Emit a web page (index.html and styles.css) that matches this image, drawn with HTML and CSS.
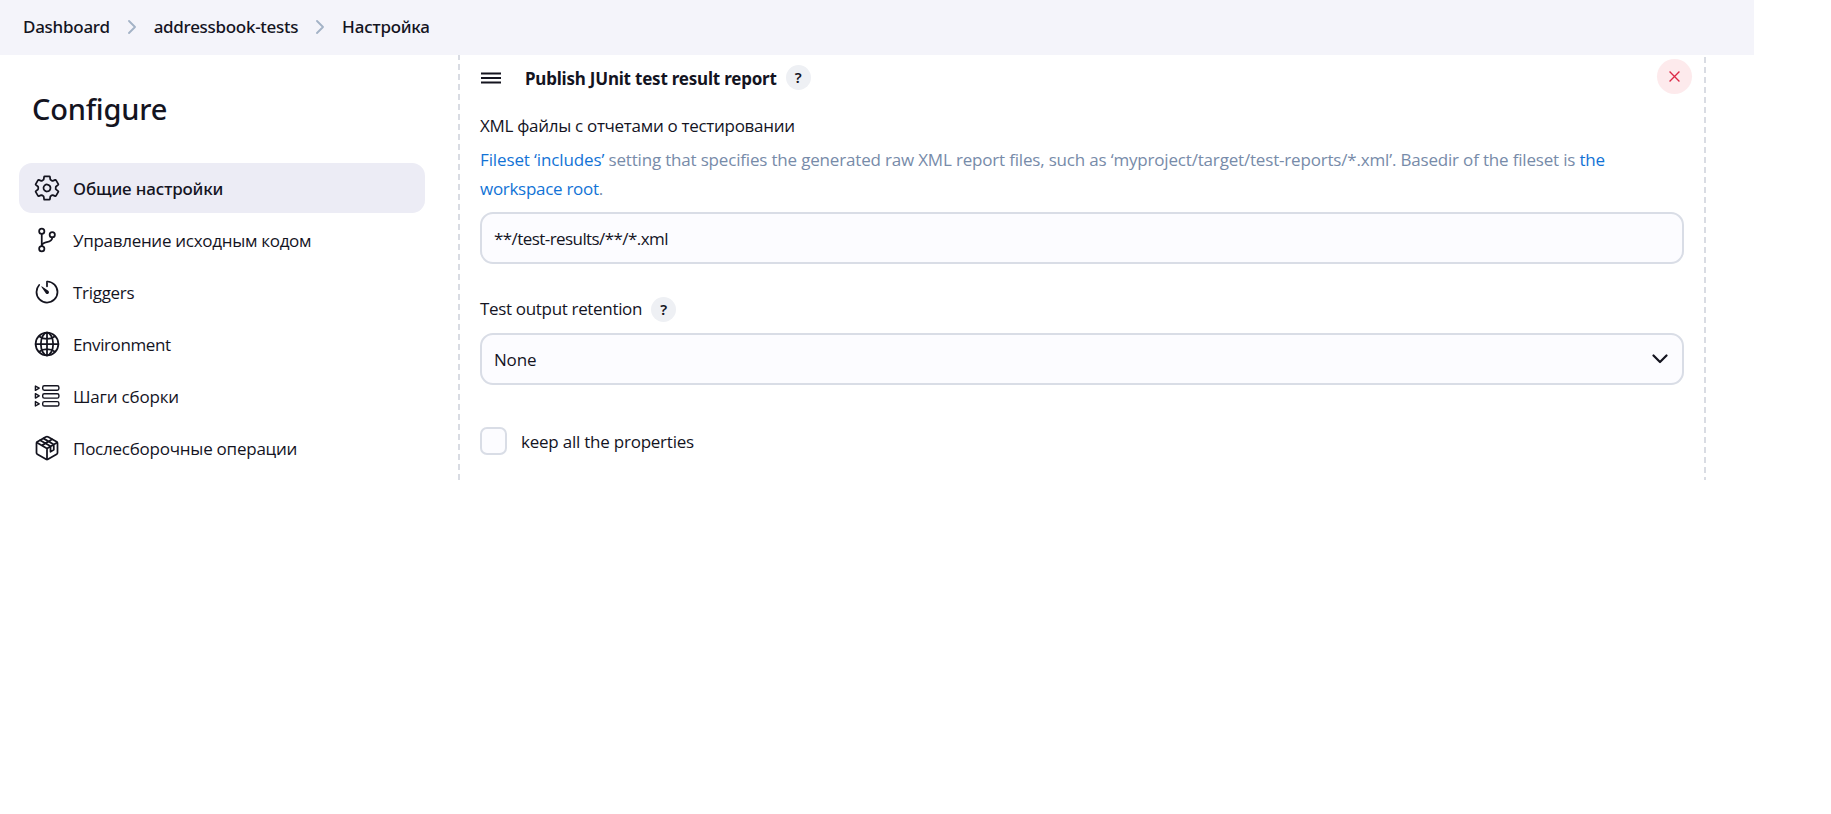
FILE: index.html
```html
<!DOCTYPE html>
<html lang="ru">
<head>
<meta charset="utf-8">
<title>Настройка</title>
<link rel="stylesheet" href="styles.css">
</head>
<body>
<div class="app">
  <header class="crumbs">
    <a class="crumb crumb-home">Dashboard</a>
    <svg class="crumb-sep" viewBox="0 0 8 14"><path d="M1 1l6 6-6 6"/></svg>
    <a class="crumb crumb-job">addressbook-tests</a>
    <svg class="crumb-sep" viewBox="0 0 8 14"><path d="M1 1l6 6-6 6"/></svg>
    <a class="crumb crumb-page">Настройка</a>
  </header>
  <div class="body">
    <aside class="side">
      <h1 class="title">Configure</h1>
      <nav class="nav">
        <a class="item item-active">
          <svg class="icon" viewBox="0 0 512 512"><path d="M262.29 192.31a64 64 0 1057.4 57.4 64.13 64.13 0 00-57.4-57.4zM416.39 256a154.34 154.34 0 01-1.53 20.79l45.21 35.46a10.81 10.81 0 012.45 13.75l-42.77 74a10.81 10.81 0 01-13.14 4.59l-44.9-18.08a16.11 16.11 0 00-15.17 1.75A164.48 164.48 0 01325 400.8a15.94 15.94 0 00-8.82 12.14l-6.73 47.89a11.08 11.08 0 01-10.68 9.17h-85.54a11.11 11.11 0 01-10.69-8.87l-6.72-47.82a16.07 16.07 0 00-9-12.22 155.3 155.3 0 01-21.46-12.57 16 16 0 00-15.11-1.71l-44.89 18.07a10.81 10.81 0 01-13.14-4.58l-42.77-74a10.8 10.8 0 012.45-13.75l38.21-30a16.05 16.05 0 006-14.08c-.36-4.17-.58-8.33-.58-12.5s.21-8.27.58-12.35a16 16 0 00-6.07-13.94l-38.19-30A10.81 10.81 0 0149.48 186l42.77-74a10.81 10.81 0 0113.14-4.59l44.9 18.08a16.11 16.11 0 0015.17-1.75A164.48 164.48 0 01187 111.2a15.94 15.94 0 008.82-12.14l6.73-47.89A11.08 11.08 0 01213.23 42h85.54a11.11 11.11 0 0110.69 8.87l6.72 47.82a16.07 16.07 0 009 12.22 155.3 155.3 0 0121.46 12.57 16 16 0 0015.11 1.71l44.89-18.07a10.81 10.81 0 0113.14 4.58l42.77 74a10.8 10.8 0 01-2.45 13.75l-38.21 30a16.05 16.05 0 00-6.05 14.08c.33 4.14.55 8.3.55 12.47z"/></svg>
          <span>Общие настройки</span>
        </a>
        <a class="item">
          <svg class="icon" viewBox="0 0 512 512"><circle cx="160" cy="96" r="48"/><circle cx="160" cy="416" r="48"/><path d="M160 368V144"/><circle cx="352" cy="160" r="48"/><path d="M352 208c0 128-192 48-192 160"/></svg>
          <span class="wide-cut">Управление исходным кодом</span>
        </a>
        <a class="item">
          <svg class="icon" viewBox="0 0 512 512"><path d="M112.91 128A191.85 191.85 0 0064 254c-1.18 106.35 85.65 193.8 192 194 106.2.2 192-85.83 192-192 0-104.54-83.55-189.61-187.5-192a4.36 4.36 0 00-4.5 4.37V152"/><path class="solid" d="M233.38 278.63l-79-113a8.13 8.13 0 0111.32-11.32l113 79a32.5 32.5 0 01-37.25 53.26 33.21 33.21 0 01-8.07-7.94z"/></svg>
          <span class="wide-cut">Triggers</span>
        </a>
        <a class="item">
          <svg class="icon" viewBox="0 0 512 512"><circle cx="256" cy="256" r="208"/><path d="M256 48c-58.07 0-112.67 93.31-112.67 208S197.93 464 256 464s112.67-93.31 112.67-208S314.07 48 256 48z"/><path d="M117.33 117.33c38.24 27.15 86.38 43.34 138.67 43.34s100.43-16.19 138.67-43.34M394.67 394.67c-38.24-27.15-86.38-43.34-138.67-43.34s-100.43 16.19-138.67 43.34M256 48v416M464 256H48"/></svg>
          <span class="env">Environment</span>
        </a>
        <a class="item">
          <svg class="icon icon-steps" viewBox="0 0 26 26"><path d="M1.4 3v4.4l3.8-2.2zM1.4 10.7v4.4l3.8-2.2zM1.4 18.6V23l3.8-2.2z"/><rect x="8.7" y="2.8" width="16.2" height="4.4" rx="1.6"/><rect x="8.7" y="10.7" width="16.2" height="4.4" rx="1.6"/><rect x="8.7" y="18.6" width="16.2" height="4.4" rx="1.6"/></svg>
          <span>Шаги сборки</span>
        </a>
        <a class="item">
          <svg class="icon" viewBox="0 0 512 512"><path d="M448 341.37V170.61A32 32 0 00432.11 143l-152-88.46a47.94 47.94 0 00-48.24 0L79.89 143A32 32 0 0064 170.61v170.76A32 32 0 0079.89 369l152 88.46a48 48 0 0048.24 0l152-88.46A32 32 0 00448 341.37z"/><path d="M69 153.99l187 110 187-110M256 463.99v-200M130 114l190 112v100l60-36v-98L190 80M165 208l187-110"/></svg>
          <span class="post">Послесборочные операции</span>
        </a>
      </nav>
    </aside>
    <main class="panel">
      <div class="head">
        <svg class="grip" viewBox="0 0 20 12"><path d="M0 1.5h20M0 6h20M0 10.5h20"/></svg>
        <b class="head-title">Publish JUnit test result report</b>
        <span class="help">?</span>
        <button class="close"><svg viewBox="0 0 10 10"><path d="M.5.5l9 9M9.5.5l-9 9"/></svg></button>
      </div>
      <div class="label label-xml">XML файлы с отчетами о тестировании</div>
      <p class="desc"><a>Fileset ‘includes’</a> setting that specifies the generated raw XML report files, such as ‘myproject/target/test-reports/*.xml’. Basedir of the fileset is <a>the<br><span class="wide-cut">workspace root</span></a>.</p>
      <div class="field"><span class="glob">**/test-results/**/*.xml</span></div>
      <div class="label label-retention"><span>Test output retention</span><span class="help">?</span></div>
      <div class="field select"><span class="value">None</span><svg class="chevron" viewBox="0 0 16 10"><path d="M1.5 1.5L8 8l6.5-6.5"/></svg></div>
      <label class="check"><span class="box"></span><span class="check-text">keep all the properties</span></label>
    </main>
  </div>
</div>
</body>
</html>
```
FILE: styles.css
```css
* { box-sizing: border-box; }
body {
  margin: 0;
  background: #fff;
  color: #14141f;
  font: 17px/26px "Open Sans", "Noto Sans", sans-serif;
  letter-spacing: -0.19px;
}
.app { width: 1754px; height: 480px; overflow: hidden; }
.crumbs {
  display: flex;
  align-items: center;
  height: 55px;
  padding: 0 0 2px 23px;
  background: #f4f4fa;
  font-family: "Noto Sans", sans-serif;
  font-weight: 500;
}
.crumb-home { letter-spacing: -0.27px; }
.crumb-job { letter-spacing: -0.3px; }
.crumb-page { letter-spacing: -0.2px; }
.crumb-sep {
  width: 8px;
  height: 14px;
  margin: 1px 18px 0;
  fill: none;
  stroke: #a3b2c6;
  stroke-width: 1.8;
  stroke-linecap: round;
  stroke-linejoin: round;
}
.body { display: flex; height: 425px; }
.side { width: 458px; padding: 33px 33px 0 19px; }
.title {
  margin: 0 0 33px 13px;
  font: 500 29px/42px "Noto Sans", sans-serif;
  letter-spacing: -0.2px;
}
.nav { display: grid; gap: 2px; }
.item {
  display: flex;
  align-items: center;
  gap: 12px;
  height: 50px;
  padding-left: 14px;
  border-radius: 13px;
}
.item span { margin-top: 2px; }
.item-active {
  background: #ececf5;
  font-family: "Noto Sans", sans-serif;
  font-weight: 500;
  letter-spacing: -0.14px;
}
.wide-cut { letter-spacing: -0.29px; }
.env { letter-spacing: -0.4px; }
.post { letter-spacing: -0.24px; }
.icon {
  width: 28px;
  height: 28px;
  margin-bottom: 1px;
  fill: none;
  stroke: #14141f;
  stroke-width: 32;
  stroke-linecap: round;
  stroke-linejoin: round;
}
.icon-steps { width: 26px; height: 26px; margin: 0 1px; stroke-width: 1.4; }
.solid { fill: #14141f; stroke: none; }
.panel {
  width: 1248px;
  padding: 4px 22px 0;
  background:
    repeating-linear-gradient(#d9dce3 0 5px, transparent 5px 9px, #d9dce3 9px 10px) 0 0 / 2px 100% no-repeat,
    repeating-linear-gradient(transparent 0 2px, #d9dce3 2px 8px, transparent 8px 10px) 100% 0 / 2px 100% no-repeat;
}
.head { display: flex; align-items: center; height: 35px; margin-right: -8px; }
.grip { width: 20px; height: 12px; margin: 3px 24px 0 1px; stroke: #14141f; stroke-width: 1.8; }
.head-title { margin-top: 5px; font-family: "Noto Sans", sans-serif; letter-spacing: -0.21px; }
.help {
  width: 25px;
  height: 25px;
  margin: 2px 0 0 9px;
  border-radius: 50%;
  background: #eef0f4;
  font: 600 15px/25px "Noto Sans", sans-serif;
  letter-spacing: 0;
  text-align: center;
}
.label-retention .help { margin-top: 0; }
.close {
  display: grid;
  place-items: center;
  width: 35px;
  height: 35px;
  margin-left: auto;
  padding: 0 1px 1px 0;
  border: 0;
  border-radius: 50%;
  background: #fdeaec;
}
.close svg { width: 11px; height: 11px; stroke: #dc2846; stroke-width: 1.2; fill: none; }
.label-xml { margin-top: 19px; letter-spacing: -0.3px; }
.desc { margin: 6px 0 9px; color: #778ba9; line-height: 29px; letter-spacing: -0.18px; white-space: nowrap; }
.desc a { color: #1273d6; }
.desc a:first-child { letter-spacing: -0.12px; }
.field {
  display: flex;
  align-items: center;
  justify-content: space-between;
  height: 52px;
  padding: 0 14px 0 12px;
  border: 2px solid #d9dde6;
  border-radius: 13px;
  background: #fcfcff;
}
.glob { margin-top: 2px; letter-spacing: -0.57px; }
.value { margin-top: 2px; }
.label-retention { display: flex; align-items: center; margin: 32px 0 11px; letter-spacing: -0.33px; }
.chevron { width: 16px; height: 10px; fill: none; stroke: #14141f; stroke-width: 2.2; stroke-linecap: round; stroke-linejoin: round; }
.check { display: flex; align-items: center; gap: 14px; margin-top: 42px; }
.check-text { margin-top: 2px; letter-spacing: -0.23px; }
.box { width: 27px; height: 28px; border: 2px solid #d9dde6; border-radius: 7px; background: #fcfcff; }
```
